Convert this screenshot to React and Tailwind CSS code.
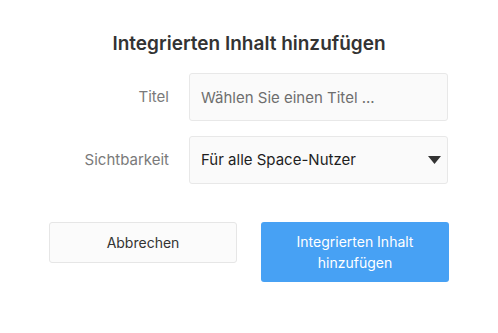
import React from "react";

const font = { fontFamily: "Inter, 'Noto Sans', sans-serif" };

const Row = ({ label, children }) => (
  <div className="flex items-center">
    <label className="w-[140px] pr-[20px] text-right text-[15px] text-[#7a7a7a]">{label}</label>
    <div className="w-[259px]">{children}</div>
  </div>
);

export default function App() {
  return (
    <div className="w-[498px] h-[333px] bg-white pt-[30px]" style={font}>
      <h2 className="text-center text-[19px] leading-[28px] font-semibold text-[#333]">
        Integrierten Inhalt hinzufügen
      </h2>

      {/* Form */}
      <div className="mx-[49px] mt-[15px] flex flex-col gap-[15px]">
        <Row label="Titel">
          <input
            className="w-[259px] h-[48px] rounded-[3px] border border-[#e8e8e8] bg-[#fafafa] px-[11px] text-[15px] text-[#222] placeholder:text-[#6e6e6e] outline-none"
            placeholder="Wählen Sie einen Titel ..."
          />
        </Row>
        <Row label="Sichtbarkeit">
          <div className="w-[259px] h-[48px] rounded-[3px] border border-[#e8e8e8] bg-[#fafafa] pl-[11px] pr-[6px] flex items-center justify-between text-[15px] text-[#1e1e1e]">
            <span>Für alle Space-Nutzer</span>
            <svg width="13" height="8" viewBox="0 0 13 8">
              <path d="M0 0H13L6.5 8Z" fill="#333" />
            </svg>
          </div>
        </Row>
      </div>

      {/* Actions */}
      <div className="mx-[49px] mt-[38px] flex items-start gap-[24px]">
        <button className="w-[188px] h-[41px] rounded-[3px] border border-[#e6e6e6] bg-[#fbfbfb] text-[14px] text-[#333]">
          Abbrechen
        </button>
        <button className="w-[188px] h-[60px] rounded-[3px] bg-[#47a1f4] px-[20px] text-[14px] leading-[21px] text-white">
          Integrierten Inhalt hinzufügen
        </button>
      </div>
    </div>
  );
}
